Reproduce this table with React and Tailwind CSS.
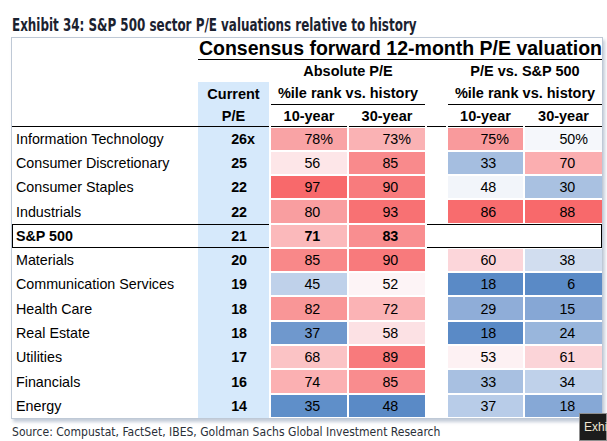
const BLUE = "bg-[#d6e9fb]";

const rows = [
  { name: "Information Technology", pe: "26", x: true, pct: true, h: "h-[24px]",
    a10: ["78", "bg-[#f9a3a5]"], a30: ["73", "bg-[#fab2b4]"], r10: ["75", "bg-[#f99a9c]"], r30: ["50", "bg-[#f5f7fb]"] },
  { name: "Consumer Discretionary", pe: "25", h: "h-[24px]",
    a10: ["56", "bg-[#fde6e8]"], a30: ["85", "bg-[#f98a8c]"], r10: ["33", "bg-[#a5bee0]"], r30: ["70", "bg-[#fbaeb0]"] },
  { name: "Consumer Staples", pe: "22", h: "h-[24px]",
    a10: ["97", "bg-[#f8696b]"], a30: ["90", "bg-[#f87b7d]"], r10: ["48", "bg-[#f2f5fa]"], r30: ["30", "bg-[#a9c1e1]"] },
  { name: "Industrials", pe: "22", h: "h-[25px]",
    a10: ["80", "bg-[#f99ea0]"], a30: ["93", "bg-[#f87173]"], r10: ["86", "bg-[#f86c6e]"], r30: ["88", "bg-[#f8696b]"] },
  { name: "S&P 500", pe: "21", total: true, h: "h-[24px]",
    a10: ["71", "bg-[#fbb9bb]"], a30: ["83", "bg-[#f98e90]"] },
  { name: "Materials", pe: "20", h: "h-[24px]",
    a10: ["85", "bg-[#f98889]"], a30: ["90", "bg-[#f87a7c]"], r10: ["60", "bg-[#fcd6da]"], r30: ["38", "bg-[#d1ddef]"] },
  { name: "Communication Services", pe: "19", h: "h-[24px]",
    a10: ["45", "bg-[#bfd1ea]"], a30: ["52", "bg-[#fdf4f6]"], r10: ["18", "bg-[#5a8ac6]"], r30: ["6", "bg-[#5a8ac6]"] },
  { name: "Health Care", pe: "18", h: "h-[25px]",
    a10: ["82", "bg-[#f99697]"], a30: ["72", "bg-[#fbb3b5]"], r10: ["29", "bg-[#8fadd8]"], r30: ["15", "bg-[#86a7d5]"] },
  { name: "Real Estate", pe: "18", h: "h-[24px]",
    a10: ["37", "bg-[#6f98cd]"], a30: ["58", "bg-[#fce1e4]"], r10: ["18", "bg-[#5a8ac6]"], r30: ["24", "bg-[#99b6dc]"] },
  { name: "Utilities", pe: "17", h: "h-[24px]",
    a10: ["68", "bg-[#fbc3c5]"], a30: ["89", "bg-[#f87a7c]"], r10: ["53", "bg-[#fdf1f3]"], r30: ["61", "bg-[#fbd4d8]"] },
  { name: "Financials", pe: "16", h: "h-[25px]",
    a10: ["74", "bg-[#fbb0b2]"], a30: ["85", "bg-[#f98c8e]"], r10: ["33", "bg-[#a8c0e1]"], r30: ["34", "bg-[#bfd1ea]"] },
  { name: "Energy", pe: "14", h: "h-[24px]",
    a10: ["35", "bg-[#5f8fc9]"], a30: ["48", "bg-[#5a8ac6]"], r10: ["37", "bg-[#b8cce8]"], r30: ["18", "bg-[#86a8d6]"] },
];

const Heat = ({ w, cell, pct, bold }) => (
  <div className={`${w} ml-[2px] py-px`}>
    <div className={`h-full ${cell[1]} flex items-center justify-end pr-[14px] pt-[2px] ${bold ? "font-bold" : ""}`}>
      {cell[0]}
      {pct ? "%" : <span className="invisible">%</span>}
    </div>
  </div>
);

const BodyRow = ({ r }) => {
  const pe = (
    <div className={`w-[71px] ${BLUE} flex items-center justify-end pr-[14px] pt-[2px] font-bold`}>
      {r.pe}
      {r.x ? "x" : <span className="invisible">x</span>}
    </div>
  );

  if (r.total) {
    return (
      <div className={`flex ${r.h}`}>
        <div className="flex w-[257px] border-y border-l border-black">
          <div className="w-[185px] flex items-center pl-[3px] pt-[2px] font-bold">{r.name}</div>
          {pe}
        </div>
        <Heat w="w-[76px]" cell={r.a10} bold />
        <Heat w="w-[76px]" cell={r.a30} bold />
        <div className="w-[175px] ml-[2px] border-y border-r border-black" />
      </div>
    );
  }

  return (
    <div className={`flex ${r.h}`}>
      <div className="w-[186px] flex items-center pl-[4px] pt-[2px]">{r.name}</div>
      {pe}
      <Heat w="w-[76px]" cell={r.a10} pct={r.pct} />
      <Heat w="w-[76px]" cell={r.a30} pct={r.pct} />
      <div className="w-[19px] ml-[2px]" />
      <Heat w="w-[75px]" cell={r.r10} pct={r.pct} />
      <Heat w="w-[77px]" cell={r.r30} pct={r.pct} />
    </div>
  );
};

export default function App() {
  return (
    <div className="relative w-[607px] h-[441px] bg-white overflow-hidden text-black font-['Liberation_Sans',Arial,sans-serif]">
      {/* Title */}
      <div className="flex h-[37px] pl-[12px] pt-[14px] whitespace-nowrap">
        <span className="origin-left scale-x-[0.737] text-[18px] leading-[22px] font-bold text-[#1b2230] font-['DejaVu_Sans_Condensed',sans-serif]">
          Exhibit 34: S&amp;P 500 sector P/E valuations relative to history
        </span>
      </div>

      {/* Table */}
      <div className="ml-[11px] w-[592px] border border-[#bfc9d6] shadow-[2px_3px_3px_rgba(110,130,160,0.4)] text-[14.3px]">
        {/* header row 1 */}
        <div className="flex h-[22px]">
          <div className="w-[186px]" />
          <div className="flex-1 border-b border-black pl-[1px] text-[19.5px] font-bold leading-[21px] whitespace-nowrap">
            Consensus forward 12-month P/E valuation
          </div>
        </div>
        {/* header row 2 */}
        <div className="flex h-[22px] text-[14.5px] font-bold">
          <div className="w-[259px]" />
          <div className="w-[154px] flex items-center justify-center pt-[2px]">Absolute P/E</div>
          <div className="w-[154px] ml-[23px] flex items-center justify-center pt-[2px]">P/E vs. S&amp;P 500</div>
        </div>
        {/* header row 3 */}
        <div className="flex h-[23px] text-[14.5px] font-bold">
          <div className="w-[186px]" />
          <div className={`w-[71px] ${BLUE} flex items-center justify-center pt-[2px]`}>Current</div>
          <div className="w-[154px] ml-[2px] border-b border-black flex items-center justify-center pt-[2px] whitespace-nowrap">
            %ile rank vs. history
          </div>
          <div className="w-[154px] ml-[23px] border-b border-black flex items-center justify-center pt-[2px] whitespace-nowrap">
            %ile rank vs. history
          </div>
        </div>
        {/* header row 4 */}
        <div className="flex h-[22px] text-[14.5px] font-bold">
          <div className="w-[186px] border-b border-black" />
          <div className={`w-[71px] ${BLUE} border-b border-black flex items-center justify-center pt-[2px]`}>P/E</div>
          <div className="w-[76px] ml-[2px] border-b border-black flex items-center justify-center pt-[2px]">10-year</div>
          <div className="w-[76px] ml-[2px] border-b border-black flex items-center justify-center pt-[2px]">30-year</div>
          <div className="w-[19px] ml-[2px] border-b border-black" />
          <div className="w-[75px] ml-[2px] border-b border-black flex items-center justify-center pt-[2px]">10-year</div>
          <div className="w-[77px] ml-[2px] border-b border-black flex items-center justify-center pt-[2px]">30-year</div>
        </div>

        {rows.map((r) => (
          <BodyRow key={r.name} r={r} />
        ))}
      </div>

      {/* Source */}
      <div className="flex pl-[12px] pt-[6px] whitespace-nowrap">
        <span className="origin-left scale-x-[0.926] text-[13px] leading-[14px] text-[#2a2f38] font-['DejaVu_Sans_Condensed',sans-serif]">
          Source: Compustat, FactSet, IBES, Goldman Sachs Global Investment Research
        </span>
      </div>

      {/* tooltip */}
      <div className="absolute left-[579px] top-[413px] w-[28px] h-[28px] bg-[#1c1c1c] border border-[#8f8f8f] pl-[4px] pt-[5px] text-[12px] leading-[16px] text-[#efe6d3] whitespace-nowrap">
        Exhi
      </div>
    </div>
  );
}
